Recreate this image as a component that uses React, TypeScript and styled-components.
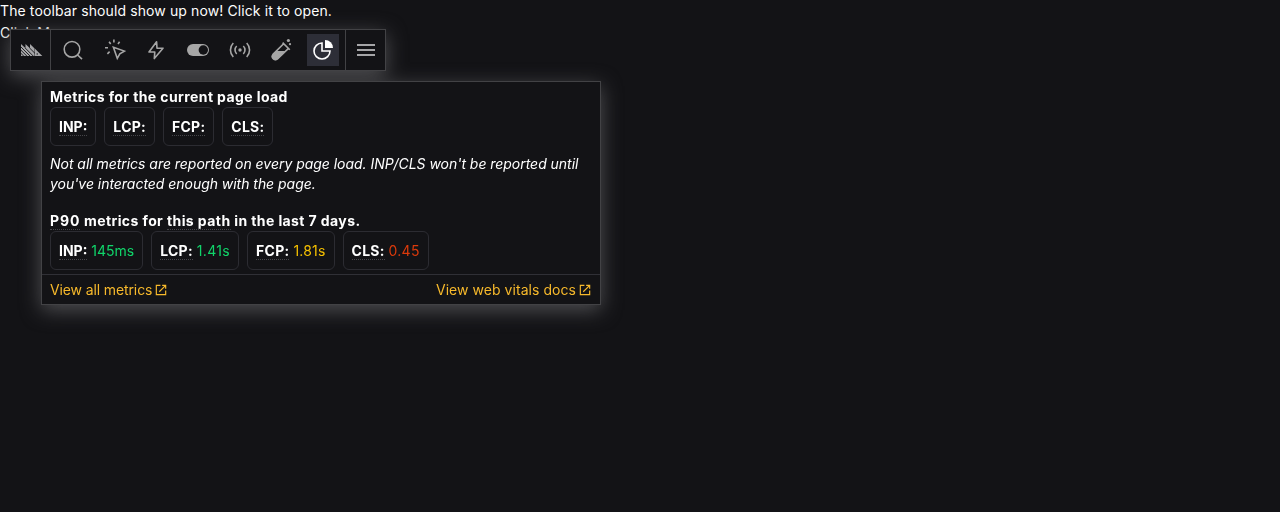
import React from "react";
import styled, { createGlobalStyle } from "styled-components";

const GlobalStyle = createGlobalStyle`
  * { box-sizing: border-box; }
  body {
    margin: 0;
    min-height: 512px;
    overflow: hidden;
    background: #131316;
    color: #fff;
    font: 14px/22px Inter, sans-serif;
  }
`;

const Page = styled.main`
  position: relative;
  height: 512px;
`;

const Line = styled.div`
  letter-spacing: 0.11px;
`;

const Floating = styled.div`
  position: absolute;
  top: 29px;
  left: 10px;
  display: flex;
  flex-direction: column;
  align-items: flex-start;
  gap: 10px;
  filter: drop-shadow(0 5px 10px #4f4f52);
`;

const Bar = styled.div`
  display: flex;
  width: 376px;
  height: 42px;
  border: 1px solid #424245;
  background: #131316;
`;

const BarEnd = styled.div<{ $side: "left" | "right" }>`
  display: flex;
  align-items: center;
  justify-content: center;
  width: 40px;
  padding-left: ${(p) => (p.$side === "left" ? "3px" : "0")};
  color: #a6a6a8;
  border-${(p) => (p.$side === "left" ? "right" : "left")}: 1px solid #424245;
`;

const Tools = styled.div`
  flex: 1;
  display: flex;
  align-items: center;
  justify-content: space-between;
  padding: 0 6px;
`;

const Tool = styled.button<{ $active?: boolean }>`
  display: flex;
  align-items: center;
  justify-content: center;
  width: 32px;
  height: 32px;
  padding: 0;
  border: 0;
  background: ${(p) => (p.$active ? "#2d2e37" : "transparent")};
  color: ${(p) => (p.$active ? "#fff" : "#a6a6a6")};
`;

const Icon = styled.svg`
  display: block;
  flex: none;
  fill: currentColor;
`;

const Panel = styled.section`
  width: 560px;
  height: 224px;
  margin-left: 31px;
  border: 1px solid #424245;
  background: #131316;
  line-height: 20px;
  display: flex;
  flex-direction: column;
`;

const PanelBody = styled.div`
  flex: 1;
  padding: 5px 8px 0;
`;

const Heading = styled.h3`
  margin: 0;
  font-size: 14px;
  line-height: 20px;
  font-weight: 700;
  letter-spacing: 0.4px;
`;

const Cards = styled.div`
  display: flex;
  gap: 8px;
`;

const Card = styled.div`
  height: 39px;
  padding: 9px 8px 0 8px;
  border: 1px solid #2c2c32;
  border-radius: 6px;
  line-height: 20px;
  white-space: pre;
`;

const Hint = styled.span<{ $track: number }>`
  display: inline-block;
  height: 19px;
  line-height: 20px;
  border-bottom: 1px dotted #46464a;
  letter-spacing: ${(p) => p.$track}px;
`;

const Label = styled(Hint)`
  font-weight: 700;
`;

const Value = styled.span<{ $tone: string; $track: number }>`
  color: ${(p) => p.$tone};
  letter-spacing: ${(p) => p.$track}px;
`;

const Note = styled.p`
  margin: 8px 0 17px;
  font-style: italic;
  letter-spacing: -0.037px;
`;

const Footer = styled.footer`
  display: flex;
  align-items: center;
  justify-content: space-between;
  height: 30px;
  padding: 0 8px;
  border-top: 1px solid #303036;
`;

const FooterLink = styled.a<{ $track: number }>`
  display: flex;
  align-items: center;
  gap: 2px;
  color: #f7b92b;
  letter-spacing: ${(p) => p.$track}px;
`;

const External = () => (
  <Icon width="14" height="14" viewBox="0 0 24 24">
    <path d="M3 3h8v2H5v14h14v-6h2v8H3zM14 3h7v7h-2V6.4l-9.3 9.3-1.4-1.4L17.6 5H14z" />
  </Icon>
);

const stroke = { fill: "none", stroke: "currentColor", strokeWidth: 1.6 } as const;

const metrics = [
  { name: "INP:", value: "145ms", tone: "#10d56a", labelTrack: 0, valueTrack: 0 },
  { name: "LCP:", value: "1.41s", tone: "#10d56a", labelTrack: 0.25, valueTrack: 0.35 },
  { name: "FCP:", value: "1.81s", tone: "#f5c000", labelTrack: 0.25, valueTrack: 0.2 },
  { name: "CLS:", value: "0.45", tone: "#dc3a0b", labelTrack: 0.25, valueTrack: 0.25 },
];

export default function App() {
  return (
    <Page>
      <GlobalStyle />
      <Line>The toolbar should show up now! Click it to open.</Line>
      <Line>Click Me</Line>
      <Floating>
        <Bar>
          <BarEnd $side="left">
            <Icon width="22" height="12" viewBox="0 0 22 12">
              <path d="M0 0l4.5 4.3V0L9 4.3V0l4.6 4.6V12H0zM14 4.8L21.3 12H14z" />
              <path
                d="M-.5 2.5L9.5 12.5M-.5 5.7L6.3 12.5M-.5 8.9L3.1 12.5M4.2 4L12.7 12.5M8.6 4L14 9.4"
                stroke="#131316"
                strokeWidth=".9"
              />
              <circle cx="16.2" cy="10" r=".7" fill="#131316" />
            </Icon>
          </BarEnd>
          <Tools>
            <Tool>
              <Icon width="24" height="24" viewBox="0 0 24 24">
                <circle cx="11" cy="11.3" r="7.8" {...stroke} />
                <path d="M16.6 17l4.4 4.2" {...stroke} />
              </Icon>
            </Tool>
            <Tool>
              <Icon width="24" height="24" viewBox="0 0 24 24">
                <path d="M10.4 9.2l11 3.9-4.6 2.7-2.5 4.5z" {...stroke} />
                <path d="M10.9 1.5v3M6.1 3.8l1.6 2.2M16.6 3.8L15 6M2 9.7h3M4.4 15.8l2.2-2.1" {...stroke} />
              </Icon>
            </Tool>
            <Tool>
              <Icon width="24" height="24" viewBox="0 0 24 24">
                <path d="M12.6 3.7L5 14h5.8l-.5 6.6L19 10.2h-6z" {...stroke} strokeLinejoin="round" />
              </Icon>
            </Tool>
            <Tool>
              <Icon width="24" height="24" viewBox="0 0 24 24">
                <rect x="1" y="6" width="22" height="12" rx="6" />
                <circle cx="17.3" cy="12" r="4.7" fill="#131316" />
              </Icon>
            </Tool>
            <Tool>
              <Icon width="24" height="24" viewBox="0 0 24 24">
                <circle cx="12" cy="12" r="1.7" />
                <path d="M8.7 8a5.6 5.6 0 0 0 0 8M15.3 8a5.6 5.6 0 0 1 0 8M5.3 5a10 10 0 0 0 0 14M18.7 5a10 10 0 0 1 0 14" {...stroke} />
              </Icon>
            </Tool>
            <Tool>
              <Icon width="24" height="24" viewBox="0 0 24 24">
                <path d="M13.6 4.6l7.2 7.2M14.6 5.8L4 16.4a3.2 3.2 0 0 0 4.5 4.5L19.5 10.4" {...stroke} />
                <path d="M7.2 13h9.6l-7.9 7.9a3.2 3.2 0 0 1-4.9-4.9z" />
                <circle cx="19.4" cy="2.5" r="1.6" />
                <circle cx="21" cy="6.2" r="1.1" />
              </Icon>
            </Tool>
            <Tool $active>
              <Icon width="24" height="24" viewBox="0 0 24 24">
                <path d="M11 5a8 8 0 1 0 8 8h-8z" {...stroke} />
                <path d="M14 2a8 8 0 0 1 8 8h-8z" />
              </Icon>
            </Tool>
          </Tools>
          <BarEnd $side="right">
            <Icon width="18" height="12" viewBox="0 0 18 12">
              <path d="M0 0h18v2H0zM0 5h18v2H0zM0 10h18v2H0z" />
            </Icon>
          </BarEnd>
        </Bar>
        <Panel>
          <PanelBody>
            <Heading>Metrics for the current page load</Heading>
            <Cards>
              {metrics.map((m) => (
                <Card key={m.name}>
                  <Label $track={m.labelTrack}>{m.name}</Label>
                </Card>
              ))}
            </Cards>
            <Note>
              Not all metrics are reported on every page load. INP/CLS won't be reported until
              you've interacted enough with the page.
            </Note>
            <Heading>
              <Hint $track={0.9}>P90</Hint> metrics for <Hint $track={0.42}>this path</Hint> in the
              last 7 days.
            </Heading>
            <Cards>
              {metrics.map((m) => (
                <Card key={m.name}>
                  <Label $track={m.labelTrack}>{m.name}</Label>{" "}
                  <Value $tone={m.tone} $track={m.valueTrack}>{m.value}</Value>
                </Card>
              ))}
            </Cards>
          </PanelBody>
          <Footer>
            <FooterLink $track={-0.12}>View all metrics <External /></FooterLink>
            <FooterLink $track={0.05}>View web vitals docs <External /></FooterLink>
          </Footer>
        </Panel>
      </Floating>
    </Page>
  );
}
